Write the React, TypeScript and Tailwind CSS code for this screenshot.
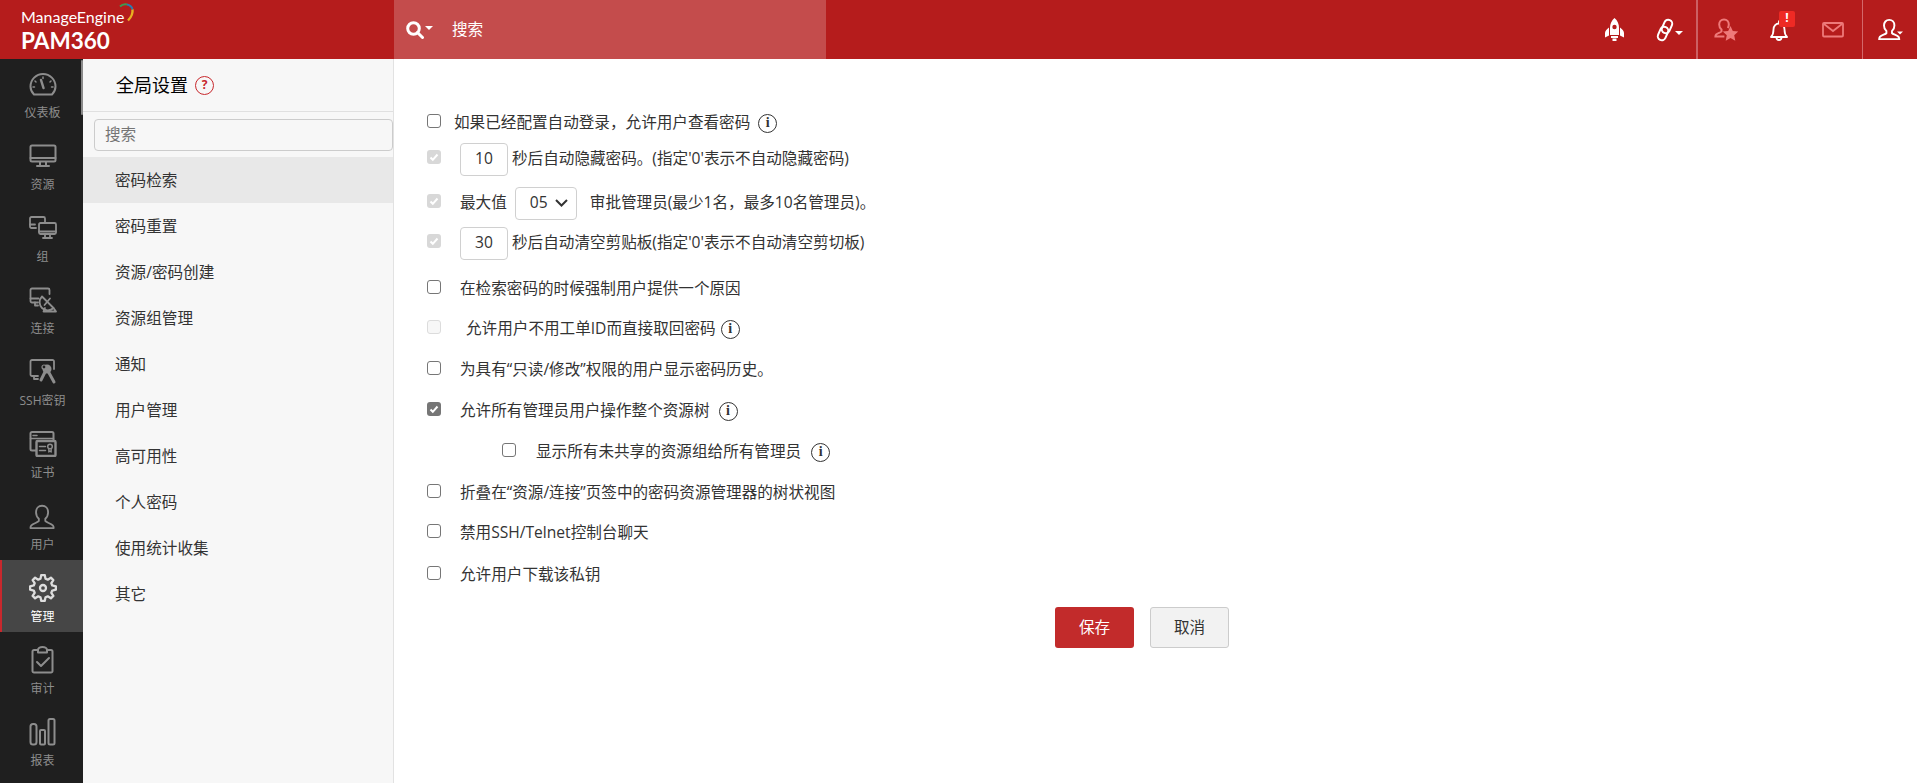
import React from "react";

const font = { fontFamily: '"Open Sans","Noto Sans CJK SC",sans-serif' };

const sw = { fill: "none", stroke: "currentColor", strokeLinecap: "round" as const, strokeLinejoin: "round" as const };

const UserPath = "M14 3c-4 0-6.5 3-6.5 7 0 3 1.2 5.5 3 7v2.5c-1 1.5-6 2.5-8 4.5-.8 1-1 2-1 3h25c0-1-.2-2-1-3-2-2-7-3-8-4.5V17c1.800-1.500 3-4 3-7 0-4-2.500-7-6.500-7z";

function Gauge() {
  return (
    <svg width="28" height="24" viewBox="0 0 28 24" {...sw} strokeWidth="2">
      <path d="M5 21.500C2.500 19 1.500 16.500 1.500 13.500a12.500 12.500 0 0 1 25 0c0 3-1 5.500-3.500 8z" />
      <path d="M12 7l2.500 8" strokeWidth="2.500" />
      <path d="M14 4v1.500M6 8l1 1M22 8l-1 1M4 14h1.500M24 14h-1.500" strokeWidth="1.500" />
    </svg>
  );
}
function Monitor() {
  return (
    <svg width="28" height="24" viewBox="0 0 28 24" {...sw} strokeWidth="2">
      <rect x="1.500" y="1.500" width="25" height="16" rx="1.500" />
      <path d="M1.500 14h25M11 18v3.500M17 18v3.500M8 22h12" />
    </svg>
  );
}
function Group() {
  return (
    <svg width="28" height="24" viewBox="0 0 28 24" {...sw} strokeWidth="1.800">
      <path d="M7 12H2.500a1.500 1.500 0 0 1-1.500-1.500v-8A1.500 1.500 0 0 1 2.500 1h12A1.500 1.500 0 0 1 16 2.500V6" />
      <path d="M1 8.500h5" />
      <rect x="10" y="7" width="17" height="11" rx="1.500" />
      <path d="M10 15.500h17M16 18v3M21 18v3M14 22h9" />
    </svg>
  );
}
function Connect() {
  return (
    <svg width="28" height="26" viewBox="0 0 28 26" {...sw} strokeWidth="1.800">
      <path d="M9 15.500H3a1.500 1.500 0 0 1-1.500-1.500V3A1.500 1.500 0 0 1 3 1.500h16A1.500 1.500 0 0 1 20.500 3v4" />
      <path d="M1.500 11.500h8M6 15.500v3h3" />
      <path d="M13 9.500a8 8 0 0 0 11.500 11.500z" />
      <path d="M15.500 18L21 11.500M16 21l-1.500 3.500h12.500L24.500 21" />
    </svg>
  );
}
function SshKey() {
  return (
    <svg width="28" height="26" viewBox="0 0 28 26" {...sw} strokeWidth="1.800">
      <path d="M9 17H3a1.500 1.500 0 0 1-1.500-1.500v-13A1.500 1.500 0 0 1 3 1h20.500A1.500 1.500 0 0 1 25 2.500V10" />
      <path d="M5 17v3h4" />
      <circle cx="18" cy="10" r="4.500" fill="currentColor" stroke="none" />
      <path d="M19 12l6 11M16 13l-4 8" strokeWidth="3" />
      <circle cx="15" cy="8" r="2" fill="#1f1f1f" stroke="currentColor" strokeWidth="1.200" />
    </svg>
  );
}
function Cert() {
  return (
    <svg width="28" height="26" viewBox="0 0 28 26" {...sw} strokeWidth="2">
      <path d="M7 19.500H3A1.500 1.500 0 0 1 1.500 18V2.500A1.500 1.500 0 0 1 3 1h20a1.500 1.500 0 0 1 1.500 1.500V9" />
      <path d="M1.500 7.500h23M4 4.500h4" strokeWidth="1.500" />
      <rect x="7.500" y="10" width="19" height="15" rx="1" strokeWidth="2.400" />
      <path d="M10.500 15.500h6M10.500 19.500h6" strokeWidth="1.500" />
      <circle cx="21" cy="15.500" r="2.300" strokeWidth="1.500" />
      <path d="M19.800 18v3l1.200-1 1.200 1v-3" strokeWidth="1.300" />
    </svg>
  );
}
function gearPath() {
  const teeth = 8;
  const pts: string[] = [];
  for (let i = 0; i < teeth; i++) {
    const a = (i / teeth) * Math.PI * 2 - Math.PI / 2;
    const step = (Math.PI * 2) / teeth;
    const list: [number, number][] = [
      [9.6, a - step * 0.34],
      [13, a - step * 0.17],
      [13, a + step * 0.17],
      [9.6, a + step * 0.34],
    ];
    for (const [r, t] of list) pts.push(`${(14 + r * Math.cos(t)).toFixed(2)} ${(14 + r * Math.sin(t)).toFixed(2)}`);
  }
  return "M" + pts.join("L") + "Z";
}
function Gear() {
  return (
    <svg width="28" height="28" viewBox="0 0 28 28" {...sw} strokeWidth="2.300">
      <path d={gearPath()} />
      <circle cx="14" cy="14" r="3" />
    </svg>
  );
}
function Audit() {
  return (
    <svg width="24" height="28" viewBox="0 0 24 28" {...sw} strokeWidth="2">
      <path d="M7 4H3a1.500 1.500 0 0 0-1.500 1.500V25A1.500 1.500 0 0 0 3 26.500h17a1.500 1.500 0 0 0 1.500-1.500V5.500A1.500 1.500 0 0 0 20 4h-4c0-1.500-2-3-4.500-3S7 2.500 7 4v2.500h9V4" />
      <path d="M6 16l4 4 8-8" />
    </svg>
  );
}
function Bars() {
  return (
    <svg width="28" height="28" viewBox="0 0 28 28" {...sw} strokeWidth="2">
      <rect x="1.500" y="6" width="6" height="20.500" rx="2.500" />
      <rect x="11" y="12" width="5" height="14.500" rx="1" />
      <rect x="19.500" y="1" width="6" height="25.500" rx="1.500" />
    </svg>
  );
}
function SideUser() {
  return (
    <svg width="28" height="26" viewBox="0 0 30 28" {...sw} strokeWidth="2">
      <path d={UserPath} />
    </svg>
  );
}

type NavItem = { label: string; icon: React.ReactNode; active?: boolean };
const nav: NavItem[] = [
  { label: "仪表板", icon: <Gauge /> },
  { label: "资源", icon: <Monitor /> },
  { label: "组", icon: <Group /> },
  { label: "连接", icon: <Connect /> },
  { label: "SSH密钥", icon: <SshKey /> },
  { label: "证书", icon: <Cert /> },
  { label: "用户", icon: <SideUser /> },
  { label: "管理", icon: <Gear />, active: true },
  { label: "审计", icon: <Audit /> },
  { label: "报表", icon: <Bars /> },
];

const menu = ["密码检索", "密码重置", "资源/密码创建", "资源组管理", "通知", "用户管理", "高可用性", "个人密码", "使用统计收集", "其它"];

function Box({ state }: { state: "off" | "on" | "dis-on" | "dis-off" }) {
  const cls =
    state === "off"
      ? "border-[1.5px] border-[#767676] bg-white"
      : state === "on"
        ? "bg-[#767676]"
        : state === "dis-on"
          ? "bg-[#d8d8d8]"
          : "border border-[#dcdcdc] bg-[#f7f7f7]";
  return (
    <span className={`flex h-[14px] w-[14px] shrink-0 -translate-y-[2px] items-center justify-center rounded-[3px] ${cls}`}>
      {(state === "on" || state === "dis-on") && (
        <svg width="10" height="10" viewBox="0 0 10 10" fill="none" stroke="#fff" strokeWidth="2">
          <path d="M1.500 5.500l2.300 2.300L8.500 2.500" />
        </svg>
      )}
    </span>
  );
}

function Info({ className = "" }: { className?: string }) {
  return (
    <span className={`flex h-[19px] w-[19px] shrink-0 items-center justify-center rounded-full border-[1.5px] border-[#333] font-['Liberation_Serif',serif] text-[14px] leading-none font-bold text-[#333] ${className}`}>
      i
    </span>
  );
}

function NumBox({ v }: { v: string }) {
  return (
    <span className="flex h-[33px] w-[48px] items-center justify-center rounded-[4px] border border-[#d0d0d0] bg-white text-[15.600px]">{v}</span>
  );
}

function Rocket() {
  return (
    <svg width="19" height="23" viewBox="0 0 19 23" fill="#fff">
      <path d="M9.500 0c3 2.500 4.500 6 4.500 9.500v7.500H5V9.500C5 6 6.500 2.500 9.500 0z" />
      <path d="M4 9.500v8L0 19.500v-4.500c0-2 2-4 4-5.500zM15 9.500v8l4 2v-4.500c0-2-2-4-4-5.500z" />
      <path d="M6 18h7v2H6zM7.500 20.500h4V23h-4z" />
      <circle cx="9.500" cy="9" r="2.200" fill="#b51c1c" />
    </svg>
  );
}
function LinkIcon() {
  return (
    <svg width="20" height="24" viewBox="0 0 20 24" fill="none" stroke="#fff" strokeWidth="2">
      <rect x="8" y="1.500" width="8" height="14" rx="4" transform="rotate(24 12 8.500)" />
      <rect x="4" y="8.500" width="8" height="14" rx="4" transform="rotate(24 8 15.500)" />
    </svg>
  );
}
function Caret({ className = "" }: { className?: string }) {
  return <span className={`inline-block h-0 w-0 border-x-[4px] border-t-[4px] border-x-transparent border-t-white ${className}`} />;
}
function UserStar() {
  return (
    <svg width="25" height="24" viewBox="0 0 25 24" fill="none" stroke="#ee7a7a" strokeWidth="2">
      <path d="M10 1.500c-3 0-4.800 2.200-4.800 5 0 2 1 4 2.300 5v2c-.8 1-4 1.800-5.300 3-.6.600-.8 1.300-.8 2h9" />
      <path d="M10 1.500c3 0 4.800 2.200 4.800 5 0 1.500-.4 2.500-1 3.500" />
      <path fill="#ee7a7a" stroke="none" d="M16.500 8l2.300 5 5.400.6-4 3.700 1.100 5.400-4.800-2.800-4.800 2.800 1.100-5.400-4-3.700 5.400-.6z" />
    </svg>
  );
}
function Bell() {
  return (
    <svg width="18" height="22" viewBox="0 0 18 22" fill="none" stroke="#fff" strokeWidth="1.800">
      <path d="M1 18c2-2 2.500-3.500 2.500-7.500C3.500 7 6 4.500 9 4.500s5.500 2.500 5.500 6c0 4 .5 5.500 2.500 7.500z" strokeLinejoin="round" />
      <path d="M9 1.500v3M6.500 18.500c0 1.500 1.200 2.500 2.500 2.500s2.500-1 2.500-2.500" />
    </svg>
  );
}
function Mail() {
  return (
    <svg width="22" height="16" viewBox="0 0 22 16" fill="none" stroke="#ee7a7a" strokeWidth="1.800">
      <rect x="1" y="1" width="20" height="13.500" rx="1" />
      <path d="M2 2l9 7 9-7" />
    </svg>
  );
}
function Search() {
  return (
    <svg width="18" height="18" viewBox="0 0 18 18" fill="none" stroke="#fff" strokeWidth="3">
      <circle cx="7.500" cy="7.500" r="5.800" />
      <path d="M11.500 11.500l5 5" strokeLinecap="round" />
    </svg>
  );
}

function Logo() {
  return (
    <div className="relative ml-[21px] flex w-[120px] flex-col text-white" style={{ fontFamily: "Lato,sans-serif" }}>
      <div className="mt-[8px] text-[16px] leading-[18px]">ManageEngine</div>
      <div className="mt-[1px] text-[22.500px] leading-[28px] font-bold">PAM360</div>
      <svg className="absolute top-[3px] left-[98px]" width="18" height="20" viewBox="0 0 18 20" fill="none" strokeWidth="2">
        <path d="M1 3.500C3 1.500 6 1 8 1.500" stroke="#3f9a4f" />
        <path d="M8 1.500c3 .5 5 2.500 5.500 5" stroke="#2b7bb0" />
        <path d="M13.500 6.500c.5 4-1.500 8-4.500 11" stroke="#e8b021" strokeWidth="2.400" />
      </svg>
    </div>
  );
}

function Header() {
  return (
    <header className="flex h-[59px] shrink-0 items-stretch bg-[#b51c1c]">
      <div className="w-[394px] shrink-0">
        <Logo />
      </div>
      <div className="flex w-[432px] items-center bg-[#c44c4c] pl-[12px] text-white">
        <Search />
        <Caret className="ml-[1px] -translate-y-[2px]" />
        <span className="ml-[19px] text-[15.600px]">搜索</span>
      </div>
      <div className="flex flex-1 items-center justify-end">
        <div className="flex w-[19px] justify-center">
          <Rocket />
        </div>
        <div className="ml-[31px] flex w-[20px] items-center">
          <LinkIcon />
        </div>
        <Caret className="mr-[13px] translate-y-[3px]" />
        <div className="flex h-full items-center border-l-2 border-[#cc6063]">
          <div className="ml-[16px] flex w-[25px] justify-center">
            <UserStar />
          </div>
          <div className="relative ml-[31px] flex w-[18px] justify-center">
            <Bell />
            <span className="absolute -top-[8px] left-[9px] flex h-[16px] w-[16px] items-start justify-center rounded-[2px] bg-[#ee2a24] pt-[1px] text-[12px] leading-[11px] font-bold text-white">!</span>
          </div>
          <div className="mr-[18px] ml-[34px] flex w-[22px] justify-center">
            <Mail />
          </div>
        </div>
        <div className="flex h-full w-[55px] items-center border-l border-[#d4686a] pl-[15px]">
          <svg width="24" height="25" viewBox="0 0 30 30" fill="none" stroke="#fff" strokeWidth="2.400">
            <path d={UserPath} />
          </svg>
          <Caret className="-ml-[6px] translate-y-[3px] scale-75" />
        </div>
      </div>
    </header>
  );
}

function Sidebar() {
  return (
    <nav className="relative flex w-[83px] shrink-0 flex-col bg-[#1f1f1f]">
      {nav.map((n, i) => (
        <div
          key={n.label}
          className={`flex w-full shrink-0 flex-col items-center border-l-2 ${i === 0 ? "h-[69px]" : "h-[72px]"} ${n.active ? "border-[#c8282d] bg-[#464646] text-[#dddddd]" : "border-transparent text-[#8d8d8d]"}`}
        >
          <div className={`flex items-center justify-center ${i === 0 ? "mt-[12px] h-[28px]" : "mt-[13px] h-[30px]"}`}>{n.icon}</div>
          <div className={`mt-[4px] text-[12px] leading-[20px] ${n.active ? "text-white" : ""}`}>{n.label}</div>
        </div>
      ))}
      <div className="absolute top-[1px] right-0 h-[55px] w-[2px] rounded bg-[#8a8a8a]" />
    </nav>
  );
}

function Column() {
  return (
    <aside className="flex w-[311px] shrink-0 flex-col border-r border-[#e2e2e2] bg-[#f7f7f7]">
      <div className="flex h-[53px] shrink-0 items-center border-b border-[#e0e0e0] pl-[33px]">
        <span className="text-[18px] text-black">全局设置</span>
        <span className="ml-[7px] flex h-[19px] w-[19px] items-center justify-center rounded-full border-[1.500px] border-[#c8282d] text-[12px] font-bold text-[#c8282d]">?</span>
      </div>
      <div className="pt-[7px] pb-[6px] pl-[11px]">
        <div className="flex h-[32px] items-center rounded-[4px] border border-[#cccccc] pl-[10px] text-[15.600px] text-[#757575]">搜索</div>
      </div>
      {menu.map((m, i) => (
        <div key={m} className={`flex h-[46px] shrink-0 items-center pl-[32px] text-[15.600px] text-[#333333] ${i === 0 ? "bg-[#e8e8e8]" : ""}`}>
          <span className="translate-y-[1px]">{m}</span>
        </div>
      ))}
    </aside>
  );
}

function Row({ mt, children }: { mt: string; children: React.ReactNode }) {
  return <div className={`flex h-[34px] items-center pl-[33px] ${mt}`}>{children}</div>;
}

function Content() {
  return (
    <main className="min-w-0 flex-1 bg-white pt-[47px] text-[15.600px] text-[#333333]">
      <Row mt="mt-0">
        <Box state="off" />
        <span className="ml-[13px]">如果已经配置自动登录，允许用户查看密码</span>
        <Info className="ml-[8px]" />
      </Row>
      <Row mt="mt-[2px]">
        <Box state="dis-on" />
        <span className="ml-[19px]"><NumBox v="10" /></span>
        <span className="ml-[4px]">秒后自动隐藏密码。(指定'0'表示不自动隐藏密码)</span>
      </Row>
      <Row mt="mt-[10px]">
        <Box state="dis-on" />
        <span className="ml-[19px]">最大值</span>
        <span className="ml-[8px] flex h-[33px] w-[62px] items-center rounded-[4px] border border-[#d0d0d0] bg-white pl-[14px]">
          05
          <svg className="ml-[7px]" width="13" height="8" viewBox="0 0 13 8" fill="none" stroke="#333" strokeWidth="2">
            <path d="M1 1l5.500 5.500L12 1" />
          </svg>
        </span>
        <span className="ml-[13px]">审批管理员(最少1名，最多10名管理员)。</span>
      </Row>
      <Row mt="mt-[6px]">
        <Box state="dis-on" />
        <span className="ml-[19px]"><NumBox v="30" /></span>
        <span className="ml-[4px]">秒后自动清空剪贴板(指定'0'表示不自动清空剪切板)</span>
      </Row>
      <Row mt="mt-[12px]">
        <Box state="off" />
        <span className="ml-[19px]">在检索密码的时候强制用户提供一个原因</span>
      </Row>
      <Row mt="mt-[6px]">
        <Box state="dis-off" />
        <span className="ml-[25px]">允许用户不用工单ID而直接取回密码</span>
        <Info className="ml-[5px]" />
      </Row>
      <Row mt="mt-[7px]">
        <Box state="off" />
        <span className="ml-[19px]">为具有“只读/修改”权限的用户显示密码历史。</span>
      </Row>
      <Row mt="mt-[7px]">
        <Box state="on" />
        <span className="ml-[19px]">允许所有管理员用户操作整个资源树</span>
        <Info className="ml-[9px]" />
      </Row>
      <Row mt="mt-[7px]">
        <span className="ml-[75px]"><Box state="off" /></span>
        <span className="ml-[20px]">显示所有未共享的资源组给所有管理员</span>
        <Info className="ml-[10px]" />
      </Row>
      <Row mt="mt-[7px]">
        <Box state="off" />
        <span className="ml-[19px]">折叠在“资源/连接”页签中的密码资源管理器的树状视图</span>
      </Row>
      <Row mt="mt-[6px]">
        <Box state="off" />
        <span className="ml-[19px]">禁用SSH/Telnet控制台聊天</span>
      </Row>
      <Row mt="mt-[8px]">
        <Box state="off" />
        <span className="ml-[19px]">允许用户下载该私钥</span>
      </Row>
      <div className="mt-[15px] flex pl-[661px]">
        <button className="flex h-[41px] w-[79px] items-center justify-center rounded-[3px] bg-[#c22b2b] text-[15.600px] text-white">保存</button>
        <button className="ml-[16px] flex h-[41px] w-[79px] items-center justify-center rounded-[3px] border border-[#cccccc] bg-[#f2f2f2] text-[15.600px] text-[#333333]">取消</button>
      </div>
    </main>
  );
}

export default function App() {
  return (
    <div className="flex h-[783px] w-full flex-col overflow-hidden bg-white" style={font}>
      <Header />
      <div className="flex min-h-0 flex-1">
        <Sidebar />
        <Column />
        <Content />
      </div>
    </div>
  );
}
